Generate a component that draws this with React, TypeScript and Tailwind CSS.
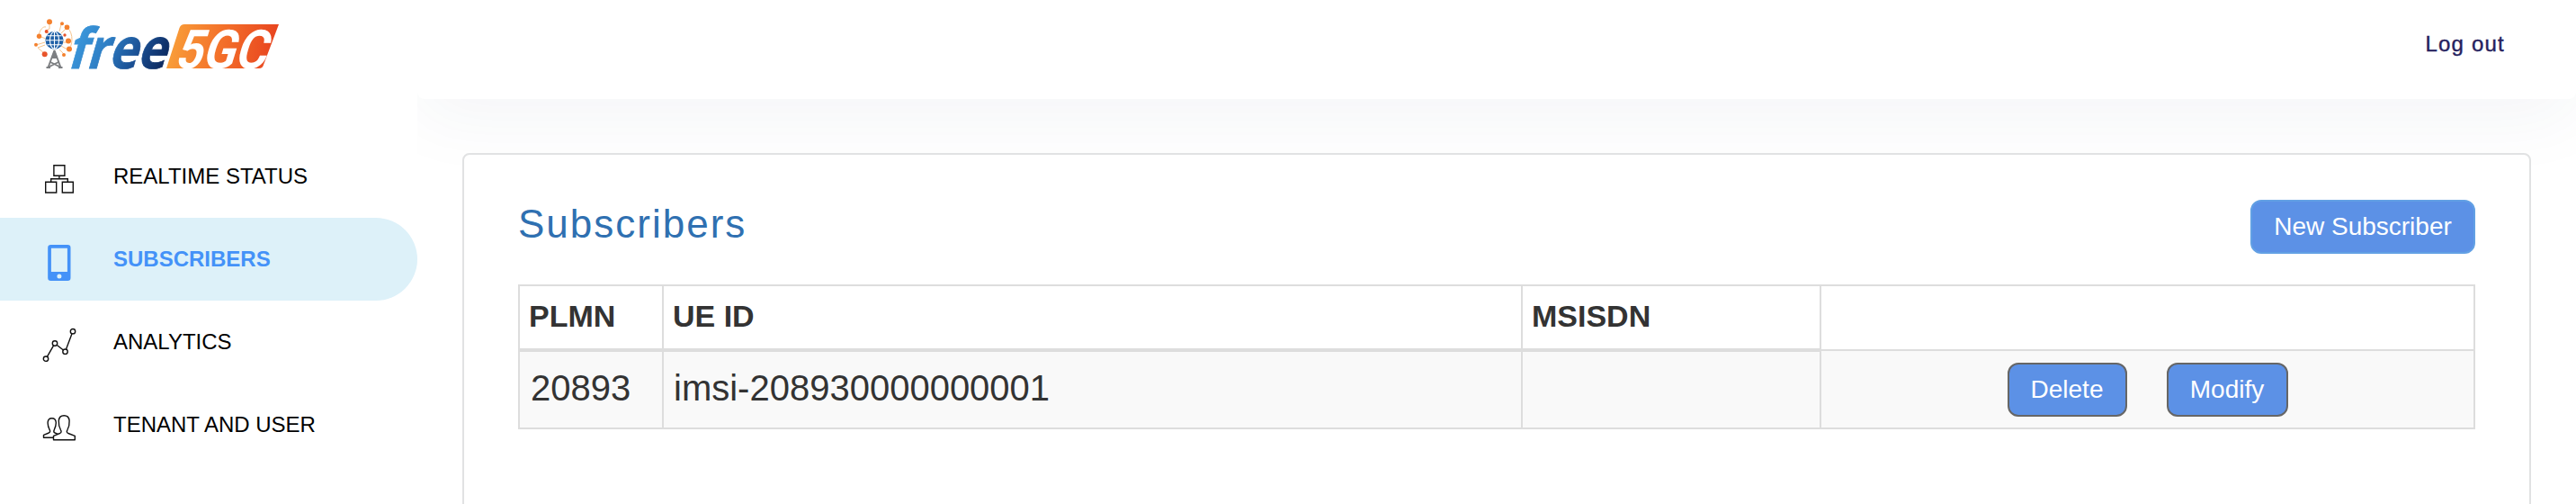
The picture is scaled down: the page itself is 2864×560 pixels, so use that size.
import React from "react";

const navText = "text-[24px] leading-[28px]";

function StatusIcon() {
  return (
    <svg width="40" height="40" viewBox="0 0 40 40" fill="none" stroke="#111" strokeWidth="1.4">
      <path d="M13.9 3.700h12v11.600h-12zM4.700 22.300h12V34h-12zM23.300 22.300h12V34h-12zM19.900 15.300v3.400M10.700 22.300v-3.600h18.600v3.600" />
    </svg>
  );
}

function PhoneIcon() {
  return (
    <svg width="40" height="40" viewBox="0 0 40 40">
      <path
        fill="#4492f8"
        fillRule="evenodd"
        d="M10.5 0h18.700a3.300 3.300 0 0 1 3.300 3.300v33.400a3.300 3.300 0 0 1-3.300 3.300H10.500a3.300 3.300 0 0 1-3.300-3.300V3.300A3.300 3.300 0 0 1 10.500 0zM10.900 3.700v26.300h18V3.700zM19.900 32.500a2.500 2.500 0 1 0 0 5a2.500 2.500 0 1 0 0-5z"
      />
    </svg>
  );
}

function AnalyticsIcon() {
  return (
    <svg width="40" height="40" viewBox="0 0 40 40" fill="none" stroke="#111" strokeWidth="1.4">
      <circle cx="5" cy="34.700" r="2.700" />
      <circle cx="15" cy="17.500" r="2.700" />
      <circle cx="26.500" cy="26.700" r="2.700" />
      <circle cx="35" cy="4.200" r="2.700" />
      <path d="M6.400 32.300 13.600 19.900M17.100 19.200l7.300 5.800M27.500 24.100 34 6.800" />
    </svg>
  );
}

function UsersIcon() {
  return (
    <svg width="40" height="40" viewBox="0 0 40 40" fill="none" stroke="#111" strokeWidth="1.4" strokeLinejoin="round">
      <path d="M13.5 32.700V28.300L20.500 25.500C22.300 24.500 22.500 23.200 21.500 21.800C19.800 18.500 19 15.500 19.300 11.500C19.600 7.500 22 5.700 25.200 5.700S30.800 7.500 31.100 11.500C31.400 15.500 30.600 18.500 28.900 21.800C27.900 23.200 28.100 24.500 29.900 25.500L37.300 28.300V32.700Z" />
      <path d="M13.300 30.300H2.500V27.300L8.300 25C9.800 24.200 10 23 9.200 21.700C7.800 18.900 7.100 16.500 7.100 13.800C7.200 10.400 9 8.700 11.700 8.700S16.200 10.400 16.300 13.800C16.300 16.500 15.600 18.900 14.200 21.700C13.600 23 13.600 24.200 15 25L18 26.200" />
    </svg>
  );
}

function Logo() {
  return (
    <svg width="340" height="110" viewBox="0 0 340 110">
      <defs>
        <linearGradient id="blue" gradientUnits="userSpaceOnUse" x1="0" y1="-20" x2="112" y2="0">
          <stop offset="0" stopColor="#3a96da" />
          <stop offset=".3" stopColor="#2f80c6" />
          <stop offset=".65" stopColor="#1a4f93" />
          <stop offset="1" stopColor="#0a2356" />
        </linearGradient>
        <linearGradient id="orange" gradientUnits="userSpaceOnUse" x1="186" y1="40" x2="306" y2="60">
          <stop offset="0" stopColor="#f9a13a" />
          <stop offset=".5" stopColor="#f3702a" />
          <stop offset="1" stopColor="#e8441f" />
        </linearGradient>
      </defs>
      <g fill="none" stroke="#f6c48d" strokeWidth="1">
        <path d="M55 26v6l-4 2M68 27l-2 8M74 31l-6 6M52 35l3 3M43 40c1-7 5-11 8-10M43 40l8 3M40 50l10-3M50 60l-8-7 8-3M70 47h6M68 51l7 4M66 55l5 5" />
        <path d="M72 28c9 6 10 18 5 27" />
      </g>
      <g fill="#f4812f">
        <circle cx="55" cy="24.300" r="3" />
        <circle cx="69" cy="26.300" r="2" />
        <circle cx="74.500" cy="30.300" r="2.800" />
        <circle cx="51.700" cy="35" r="2" fill="#e8542a" />
        <circle cx="43.500" cy="40.300" r="2.700" />
        <circle cx="40" cy="49.700" r="2" />
        <circle cx="49.700" cy="60.300" r="3" fill="#e8542a" />
        <circle cx="72" cy="39" r="1.700" fill="#e8542a" />
        <circle cx="76" cy="45.500" r="3" />
        <circle cx="77" cy="54.500" r="3" />
        <circle cx="71" cy="61" r="2" />
      </g>
      <circle cx="60.500" cy="44.700" r="10" fill="#1e5fa6" />
      <g fill="none" stroke="#fff" strokeWidth="1.100">
        <path d="M51 44.700h19M60.500 35.500v19M52.500 39.700h16M52.500 49.700h16" />
        <ellipse cx="60.500" cy="44.700" rx="5" ry="9.500" />
      </g>
      <path d="M60.500 56 53.500 75M60.500 56 67.500 75M57.500 64h6M56 69l10 5M65 69l-10 5M51.500 75h4.500M65 75h4.500" fill="none" stroke="#7d7f82" strokeWidth="1.900" />
      <path d="M60.500 55l3.500 9h-7z" fill="#7d7f82" />
      <text transform="translate(74 75.500) skewX(-16)" x="0" y="0" textLength="110" lengthAdjust="spacingAndGlyphs" fontFamily="Open Sans" fontWeight="700" fontSize="62" fill="url(#blue)" stroke="url(#blue)" strokeWidth=".8">free</text>
      <path d="M205 27h105l-17 45q-1 4-5 4H185l14.500-45q1.500-4 5.500-4z" fill="url(#orange)" />
      <text transform="translate(193 75.500) skewX(-17)" x="0" y="0" textLength="101" lengthAdjust="spacingAndGlyphs" fontFamily="Roboto" fontWeight="700" fontSize="60" fill="#fff">5GC</text>
    </svg>
  );
}

const items = [
  { label: "REALTIME STATUS", icon: <StatusIcon />, active: false },
  { label: "SUBSCRIBERS", icon: <PhoneIcon />, active: true },
  { label: "ANALYTICS", icon: <AnalyticsIcon />, active: false },
  { label: "TENANT AND USER", icon: <UsersIcon />, active: false },
];

const cell = "border-2 border-[#ddd]";
const head = "border-2 border-b-4 border-[#ddd] px-[10px] text-left align-top pt-[13px] text-[34px] leading-[40px] font-bold";
const btn = "h-[60px] rounded-[12px] border-2 bg-[#5c91e6] text-[28px] leading-[40px] text-white";

export default function App() {
  return (
    <div className="flex h-[560px] w-[2864px] overflow-hidden bg-white font-['Liberation_Sans',Arial,sans-serif] text-[#333]">
      <aside className="z-10 flex w-[464px] shrink-0 flex-col bg-white">
        <div className="h-[150px]">
          <Logo />
        </div>
        <nav>
          {items.map((item) => (
            <a
              key={item.label}
              className={
                item.active
                  ? "flex h-[92px] items-start rounded-r-full bg-[#ddf1f9] pl-[46px] font-bold text-[#4492f8]"
                  : "flex h-[92px] items-start pl-[46px] text-black"
              }
            >
              <span className="mt-[30px] w-[80px]">{item.icon}</span>
              <span className={`mt-[32px] ${navText}`}>{item.label}</span>
            </a>
          ))}
        </nav>
      </aside>
      <div className="flex min-w-0 grow flex-col overflow-hidden">
        <header className="flex h-[110px] shrink-0 items-start justify-end rounded-b-[8px] bg-white pt-[35px] pr-[79px] shadow-[0_20px_80px_rgba(31,55,100,0.05)]">
          <a className="text-[24px] leading-[28px] tracking-[1.2px] text-[#25215e] [-webkit-text-stroke:0.4px_#25215e]">Log out</a>
        </header>
        <main className="relative mt-[60px] mr-[50px] ml-[50px] h-[500px] shrink-0 rounded-[8px] border-2 border-[#e1e2e3] bg-white px-[60px] pt-[50px]">
          <div className="flex h-[94px] items-start justify-between">
            <h1 className="pt-[1px] text-[44px] leading-[52px] tracking-[2px] text-[#2f70b1]">Subscribers</h1>
            <button className={`${btn} w-[250px] border-[#62a0e4]`}>New Subscriber</button>
          </div>
          <table className="w-[2176px] table-fixed border-collapse">
            <colgroup>
              <col className="w-[160px]" />
              <col className="w-[955px]" />
              <col className="w-[332px]" />
              <col />
            </colgroup>
            <thead>
              <tr className="h-[72px]">
                <th className={head}>PLMN</th>
                <th className={head}>UE ID</th>
                <th className={head}>MSISDN</th>
                <th className={cell}></th>
              </tr>
            </thead>
            <tbody>
              <tr className="h-[87px] bg-[#f9f9f9] text-[40px] leading-[46px]">
                <td className={`${cell} px-[12px] pb-[4px]`}>20893</td>
                <td className={`${cell} px-[11px] pb-[4px]`}>imsi-208930000000001</td>
                <td className={cell}></td>
                <td className={cell}>
                  <div className="flex justify-center gap-[44px]">
                    <button className={`${btn} w-[133px] border-[#666]`}>Delete</button>
                    <button className={`${btn} w-[135px] border-[#666]`}>Modify</button>
                  </div>
                </td>
              </tr>
            </tbody>
          </table>
        </main>
      </div>
    </div>
  );
}
